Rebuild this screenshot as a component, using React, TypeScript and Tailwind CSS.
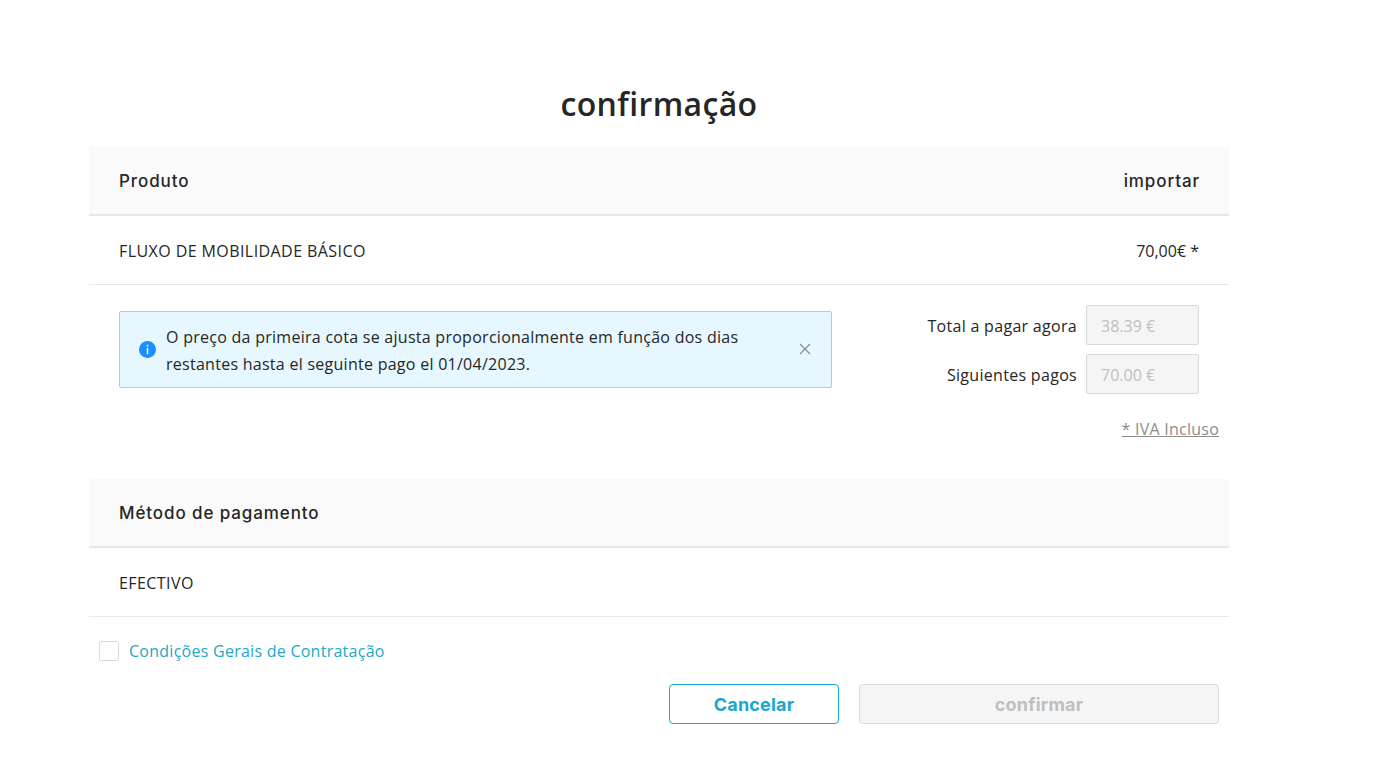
const bodyFont = "font-['Open_Sans',sans-serif]";
const headFont = "font-['Inter',sans-serif]";

const SectionHeader = ({ left, right }: { left: string; right?: string }) => (
  <div className={`flex h-[69px] items-center justify-between border-b-2 border-[#e8e8e8] bg-[#fafafa] pl-[30px] pr-[29px] pt-[3px] text-[17px] font-medium tracking-[0.9px] text-[#262626] ${headFont}`}>
    <span>{left}</span>
    {right ? <span>{right}</span> : null}
  </div>
);

const TotalRow = ({ label, value }: { label: string; value: string }) => (
  <div className="flex items-center justify-end">
    <span className="mr-[9px] pt-px text-[16px] tracking-[0.3px] text-[#262626]">{label}</span>
    <div className="flex h-[40px] w-[113px] items-center rounded-[2px] border border-[#d9d9d9] bg-[#f5f5f5] pl-[14px] pt-[2px] text-[16px] text-[#bfbfbf]">
      {value}
    </div>
  </div>
);

export default function App() {
  return (
    <div className={`min-h-[767px] bg-white ${bodyFont}`}>
      <div className="ml-[89px] w-[1140px] pt-[80px]">
        <h1 className="mb-[19px] h-[48px] text-center text-[32px] leading-[48px] font-semibold tracking-[0.35px] text-[#262626]">
          confirmação
        </h1>

        <SectionHeader left="Produto" right="importar" />
        <div className="flex h-[69px] items-center justify-between border-b border-[#e8e8e8] px-[30px] pt-[2px] text-[16px] text-[#262626]">
          <span className="tracking-[0.42px]">FLUXO DE MOBILIDADE BÁSICO</span>
          <span>70,00€ *</span>
        </div>

        <div className="flex h-[194px] items-start justify-between pl-[30px] pr-[10px]">
          <div className="mt-[26px] flex h-[77px] w-[713px] items-center rounded-[2px] border border-[#91d5ff] bg-[#e6f7ff] pl-[19px] pr-[20px]">
            <svg viewBox="0 0 16 16" className="h-[17px] w-[17px] shrink-0">
              <circle cx="8" cy="8" r="8" fill="#1890ff" />
              <rect x="7.3" y="3.6" width="1.4" height="1.6" fill="#fff" />
              <rect x="7.3" y="6.6" width="1.4" height="5.8" fill="#fff" />
            </svg>
            <p className="ml-[10px] flex-1 pt-[2px] text-[16px] leading-[27px] tracking-[0.27px] text-[#262626]">
              O preço da primeira cota se ajusta proporcionalmente em função dos dias
              <br />
              restantes hasta el seguinte pago el 01/04/2023.
            </p>
            <svg viewBox="0 0 12 12" className="mb-[2px] h-[12px] w-[12px] shrink-0 text-[#7f8a92]" fill="none" stroke="currentColor" strokeWidth="1.1">
              <path d="M1 1l10 10M11 1L1 11" />
            </svg>
          </div>

          <div className="pt-[20px]">
            <div className="flex flex-col gap-[9px] pr-[20px]">
              <TotalRow label="Total a pagar agora" value="38.39 €" />
              <TotalRow label="Siguientes pagos" value="70.00 €" />
            </div>
            <div className="mt-[23px] text-right text-[16px] leading-[24px] tracking-[0.25px] text-[#8c8c8c] underline">
              * IVA Incluso
            </div>
          </div>
        </div>

        <SectionHeader left="Método de pagamento" />
        <div className="flex h-[69px] items-center border-b border-[#e8e8e8] px-[30px] pt-[2px] text-[16px] tracking-[0.42px] text-[#262626]">
          EFECTIVO
        </div>

        <div className="mt-[24px] flex items-center pl-[10px]">
          <span className="h-[20px] w-[20px] rounded-[2px] border border-[#d9d9d9] bg-white" />
          <span className="ml-[10px] text-[16px] leading-[20px] tracking-[0.26px] text-[#1ba8c9]">
            Condições Gerais de Contratação
          </span>
        </div>

        <div className={`mt-[23px] flex justify-end gap-[20px] pr-[10px] text-[18px] font-bold tracking-[0.2px] ${headFont}`}>
          <button type="button" className="h-[40px] w-[170px] rounded-[4px] border border-[#0fadd1] bg-white text-[#17a9cc]">
            Cancelar
          </button>
          <button type="button" disabled className="h-[40px] w-[360px] rounded-[4px] border border-[#d9d9d9] bg-[#f5f5f5] text-[#bfbfbf]">
            confirmar
          </button>
        </div>
      </div>
    </div>
  );
}
